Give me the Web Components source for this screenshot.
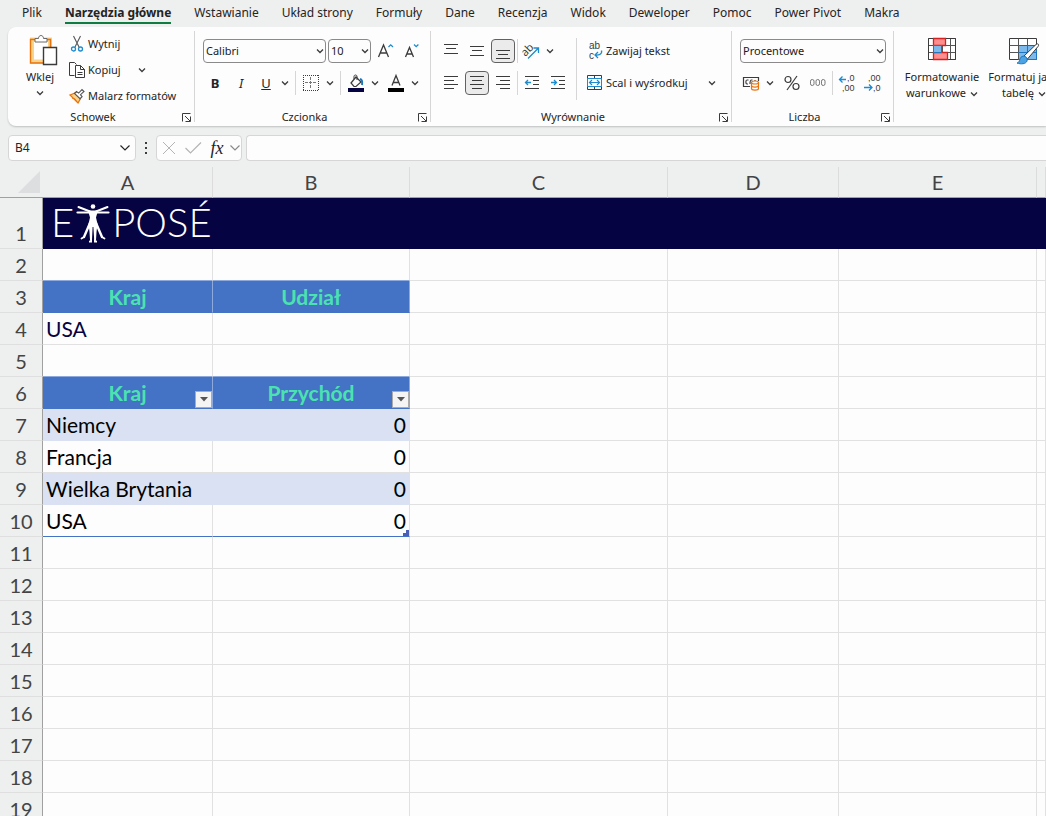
<!DOCTYPE html>
<html lang="pl">
<head>
<meta charset="utf-8">
<meta name="viewport" content="width=device-width, initial-scale=1">
<title>Arkusz</title>
<style>
  html, body { height: 100%; }
  body {
    margin: 0; display: flex; flex-direction: column; overflow: hidden;
    background: #eeefef; color: #242424;
    font: 11px/16px "Noto Sans", "Open Sans", sans-serif;
  }
</style>
</head>
<body>
<ribbon-tabs></ribbon-tabs>
<ribbon-bar>
  <ribbon-group name="Schowek" launcher size="clipboard">
    <tool-button icon="paste" big arrow>Wklej</tool-button>
    <tool-stack>
      <tool-row dense><tool-button icon="cut" wide>Wytnij</tool-button></tool-row>
      <tool-row dense><tool-button icon="copy" wide>Kopiuj</tool-button><tool-arrow label="Opcje kopiowania" spaced></tool-arrow></tool-row>
      <tool-row dense><tool-button icon="painter" wide>Malarz formatów</tool-button></tool-row>
    </tool-stack>
  </ribbon-group>
  <ribbon-group name="Czcionka" launcher size="font">
    <tool-stack>
      <tool-row>
        <drop-down label="Czcionka" value="Calibri" size="font"></drop-down>
        <drop-down label="Rozmiar czcionki" value="10" size="small"></drop-down>
        <tool-button icon="grow" label="Zwiększ rozmiar czcionki"></tool-button>
        <tool-button icon="shrink" label="Zmniejsz rozmiar czcionki"></tool-button>
      </tool-row>
      <tool-row>
        <tool-button label="Pogrubienie" glyph><b>B</b></tool-button>
        <tool-button label="Kursywa" glyph><i>I</i></tool-button>
        <tool-button label="Podkreślenie" glyph narrow><u>U</u></tool-button><tool-arrow label="Rodzaj podkreślenia"></tool-arrow>
        <tool-divider></tool-divider>
        <tool-button icon="borders" label="Obramowanie" narrow></tool-button><tool-arrow label="Rodzaj obramowania"></tool-arrow>
        <tool-divider></tool-divider>
        <tool-button icon="fill" label="Kolor wypełnienia" narrow></tool-button><tool-arrow label="Wybierz kolor wypełnienia"></tool-arrow>
        <tool-divider blank></tool-divider>
        <tool-button icon="color" label="Kolor czcionki" narrow></tool-button><tool-arrow label="Wybierz kolor czcionki"></tool-arrow>
      </tool-row>
    </tool-stack>
  </ribbon-group>
  <ribbon-group name="Wyrównanie" launcher size="align">
    <tool-stack>
      <tool-row>
        <tool-button icon="top" label="Wyrównaj do góry"></tool-button>
        <tool-button icon="middle" label="Wyrównaj do środka w pionie"></tool-button>
        <tool-button icon="bottom" label="Wyrównaj do dołu" pressed></tool-button>
        <tool-divider tight></tool-divider>
        <tool-button icon="orient" label="Orientacja" narrow></tool-button><tool-arrow label="Opcje orientacji"></tool-arrow>
      </tool-row>
      <tool-row>
        <tool-button icon="left" label="Wyrównaj do lewej"></tool-button>
        <tool-button icon="center" label="Wyśrodkuj" pressed></tool-button>
        <tool-button icon="right" label="Wyrównaj do prawej"></tool-button>
        <tool-divider tight></tool-divider>
        <tool-button icon="outdent" label="Zmniejsz wcięcie"></tool-button>
        <tool-button icon="indent" label="Zwiększ wcięcie"></tool-button>
      </tool-row>
    </tool-stack>
    <tool-divider tall></tool-divider>
    <tool-stack grow>
      <tool-row><tool-button icon="wrap" wide>Zawijaj tekst</tool-button></tool-row>
      <tool-row><tool-button icon="merge" wide>Scal i wyśrodkuj</tool-button><tool-arrow label="Opcje scalania" end></tool-arrow></tool-row>
    </tool-stack>
  </ribbon-group>
  <ribbon-group name="Liczba" launcher size="number">
    <tool-stack>
      <tool-row><drop-down label="Format liczb" value="Procentowe" size="large"></drop-down></tool-row>
      <tool-row>
        <tool-button icon="money" label="Księgowy format liczb" narrow></tool-button><tool-arrow label="Waluty"></tool-arrow>
        <tool-divider blank></tool-divider>
        <tool-button icon="percent" label="Zapis procentowy"></tool-button>
        <tool-button icon="thousands" label="Zapis dziesiętny"></tool-button>
        <tool-divider tight></tool-divider>
        <tool-button icon="moredec" label="Zwiększ dziesiętne"></tool-button>
        <tool-button icon="lessdec" label="Zmniejsz dziesiętne"></tool-button>
      </tool-row>
    </tool-stack>
  </ribbon-group>
  <ribbon-group name="" last>
    <tool-button icon="condfmt" big inline-arrow>Formatowanie<br>warunkowe</tool-button>
    <tool-button icon="tablefmt" big inline-arrow>Formatuj jako<br>tabelę</tool-button>
  </ribbon-group>
</ribbon-bar>
<formula-bar></formula-bar>
<sheet-grid></sheet-grid>

<script>
const G = 'stroke="#3b3b3b" fill="none"';
const B = 'stroke="#1e8bcd" fill="none"';
const T = 'font-family="Liberation Sans, sans-serif" font-size="9" fill="#3b3b3b"';
const hl = rows => rows.map(([x, y, w]) => `<path d="M${x} ${y}.5h${w}"/>`).join('');
const ICONS = {
  chevron: [8, 6, `<path d="M1 1.5l3 3 3-3" ${G} stroke-width="1.3"/>`],
  bigchevron: [12, 8, `<path d="M1.500 1.500l4.500 4.500 4.500-4.500" fill="none" stroke="currentColor" stroke-width="1.200"/>`],
  launcher: [9, 9, `<path d="M.5 8.500V.5H8.500M3 3l5 5M8.500 3.500v5h-5" stroke="#3b3b3b" fill="none"/>`],
  paste: [30, 32, `<path d="M4 4.500h18v22H4z" fill="#fff" stroke="#fbd38a" stroke-width="4"/><path d="M2.500 4.500h20v23.500H2.500z" stroke="#e8730c" fill="none" stroke-width="1.400"/><path d="M7 7V3.500h3.500c0-4 5-4 5 0H19V7z" fill="#fff" stroke="#6a6a6a"/><path d="M15.500 12.500h13v17h-13z" fill="#fff" stroke="#3b3b3b" stroke-width="1.400"/>`],
  cut: [16, 18, `<path d="M4.500 1l5.500 11M11.500 1L6 12" stroke="#555" fill="none" stroke-width="1.100"/><circle cx="4.500" cy="14" r="2" ${B} stroke-width="1.300"/><circle cx="11.500" cy="14" r="2" ${B} stroke-width="1.300"/>`],
  copy: [16, 18, `<path d="M5.500 14.500h-5V1.500h5l2 2" ${G}/><path d="M6.500 4.500h5l4 4v8h-9z" fill="#fff" stroke="#3b3b3b"/><path d="M11.500 4.500v4h4M8.500 11.500h5M8.500 13.500h5" ${G}/>`],
  painter: [16, 16, `<path d="M1 7l5-2 5.500 5.500L9 15z" fill="#fbd38a" stroke="#e8730c" stroke-width="1.300"/><path d="M3 10l3 1 2 3" stroke="#e8730c" fill="none"/><path d="M5.500 5.500l2-2 2.200 1.600L13 1.500 15 3.500l-3.500 3.200 1.600 2-2.100 2z" fill="#fff" stroke="#555" stroke-width="1.100"/>`],
  grow: [17, 16, `<path d="M1.500 14L6.500 2 11.500 14M3 10h7" ${G} stroke-width="1.300"/><path d="M11.500 4l2.200-2.200L16 4" ${B} stroke-width="1.300"/>`],
  shrink: [17, 16, `<path d="M2.500 14L6.500 4.500 10.500 14M4 11h5.500" ${G} stroke-width="1.300"/><path d="M11 1.500l2.200 2.200 2.200-2.200" ${B} stroke-width="1.300"/>`],
  borders: [16, 16, `<path d="M0 .5h16M0 15.500h16M.5 0v16M15.500 0v16" stroke="#3b3b3b" stroke-dasharray="1 1"/><path d="M2 7.500h12M7.500 2v12" stroke="#777" stroke-dasharray="3 1"/>`],
  fill: [16, 18, `<path d="M3 9l5-6 5 5-5 4.500H6z" ${G} stroke-width="1.200"/><path d="M6 5V2.500c0-2 3-2 3 0V6" ${G}/><path d="M12 5c2 .5 2.500 3 2 6" stroke="#1e74bd" fill="none" stroke-width="2"/><path d="M0 14h16v4H0z" fill="#050341"/>`],
  color: [16, 18, `<path d="M4 11.500L8 1.500l4 10M5.500 8.500h5" ${G} stroke-width="1.300"/><path d="M0 14h16v4H0z" fill="#000"/>`],
  top: [16, 16, `<g ${G}>${hl([[1, 1, 14], [3, 5, 10], [1, 10, 14]])}</g>`],
  middle: [16, 16, `<g ${G}>${hl([[1, 3, 14], [3, 7, 10], [1, 12, 14]])}</g>`],
  bottom: [16, 16, `<g ${G}>${hl([[1, 7, 14], [3, 11, 10], [1, 15, 14]])}</g>`],
  left: [16, 16, `<g ${G}>${hl([[1, 1, 14], [1, 5, 10], [1, 9, 14], [1, 13, 10]])}</g>`],
  center: [16, 16, `<g ${G}>${hl([[1, 1, 14], [3, 5, 10], [1, 9, 14], [3, 13, 10]])}</g>`],
  right: [16, 16, `<g ${G}>${hl([[1, 1, 14], [5, 5, 10], [1, 9, 14], [5, 13, 10]])}</g>`],
  outdent: [16, 16, `<g ${G}>${hl([[1, 1, 14], [9, 5, 6], [9, 9, 6], [1, 13, 14]])}</g><path d="M7 7.500H1.500M4 5L1.500 7.500 4 10" ${B} stroke-width="1.300"/>`],
  indent: [16, 16, `<g ${G}>${hl([[1, 1, 14], [9, 5, 6], [9, 9, 6], [1, 13, 14]])}</g><path d="M1 7.500h5.500M4 5l2.500 2.500L4 10" ${B} stroke-width="1.300"/>`],
  orient: [18, 18, `<text x="-1" y="11" transform="rotate(-45 6 8)" font-size="11" fill="#3b3b3b">ab</text><path d="M6 16.500L16 6.500M11.500 6H16.500V11" ${B} stroke-width="1.300"/>`],
  wrap: [16, 18, `<g ${T}><text x="2" y="7" font-size="10">ab</text><text x="2" y="17" font-size="10">c</text></g><path d="M14.500 8.500c1 4-3 5-6.500 4.500M11 10l-3 3 3 3" ${B} stroke-width="1.300"/>`],
  merge: [16, 16, `<path d="M.5.5h14v14H.5zM7.500.5v3M7.500 11.500v3" ${G}/><path d="M.5 3.500h14v8H.5z" fill="#fff" stroke="#1e8bcd"/><path d="M2.500 7.500h10M5 5L2.500 7.500 5 10M10 5l2.500 2.500L10 10" ${B} stroke-width="1.200"/>`],
  money: [18, 16, `<path d="M8 11.500H1.500v-9h15V6M6.500 5H5C3.500 5 3.500 9 5 9h1M10.500 5h-1C8 5 8 7 8 9M13 5v1" ${G} stroke-width="1.200"/><path d="M9.500 7.500v6c0 2.200 7 2.200 7 0v-6z" fill="#fff" stroke="#e8730c" stroke-width="1.200"/><ellipse cx="13" cy="7.500" rx="3.500" ry="1.500" fill="#fff" stroke="#e8730c" stroke-width="1.200"/><path d="M9.500 10.500c0 2.200 7 2.200 7 0" fill="none" stroke="#e8730c" stroke-width="1.200"/>`],
  percent: [18, 18, `<circle cx="5" cy="5.500" r="3" ${G} stroke-width="1.200"/><circle cx="13" cy="12.500" r="3" ${G} stroke-width="1.200"/><path d="M14 2L4 16" ${G} stroke-width="1.200"/>`],
  thousands: [18, 16, `<g stroke="#777" fill="none"><rect x="1.500" y="4.500" width="3.500" height="6" rx="1.700"/><rect x="7" y="4.500" width="3.500" height="6" rx="1.700"/><rect x="12.500" y="4.500" width="3.500" height="6" rx="1.700"/></g>`],
  moredec: [18, 18, `<g ${T}><text x="9" y="7">,0</text><text x="4" y="17">,00</text></g><path d="M8 5.500H1.500M4.500 2.500l-3 3 3 3" ${B} stroke-width="1.300"/>`],
  lessdec: [18, 18, `<g ${T}><text x="4" y="7">,00</text><text x="9" y="17">,0</text></g><path d="M0 13.500h8M5 10.500l3 3-3 3" ${B} stroke-width="1.300"/>`],
  condfmt: [30, 24, `<path d="M1.500 1.500h27v21h-27zM1.500 8.500h27M1.500 15.500h27M6.500 1.500v21M15.500 1.500v21M23.500 1.500v21" fill="#fff" stroke="#555"/><path d="M6.500 1.500h12v7h-12zM6.500 15.500h14v7h-14z" fill="#ff8f8f" stroke="#d61f1f" stroke-width="1.300"/><path d="M6.500 8.500h8v7h-8z" fill="#7db9ea" stroke="#2673b8"/><path d="M6 1.500H1.500v21H6M19 1.500h9.500v21h-7" ${G}/>`],
  tablefmt: [32, 28, `<path d="M1.500 1.500h27v21h-27z" fill="#fff" stroke="#3b3b3b"/><path d="M10.500 8.500h18v14h-18z" fill="#7db9ea" stroke="#1e74bd"/><path d="M1.500 8.500h27M1.500 15.500h9M10.500 1.500v21M19.500 1.500v7" stroke="#555"/><path d="M10.500 15.500h18M19.500 8.500v14" stroke="#1e74bd"/><path d="M16 19L28 7.500c2-1.500 3.500 0 2 2L19.500 22z" fill="#fff" stroke="#3b3b3b"/><path d="M9 26c3 0 2-5 5-6.500s6 1.500 5 4.500-6 3.500-10 2z" fill="#4ba3e3" stroke="#1e74bd"/>`],
  cancel: [14, 14, `<path d="M1 1l12 12M13 1L1 13" stroke="#b4b4b4"/>`],
  accept: [18, 14, `<path d="M1.500 7l5 5L17 1.500" fill="none" stroke="#b4b4b4" stroke-width="1.200"/>`],
  dots: [4, 12, `<g fill="#3b3b3b"><path d="M1 0h2v2H1zM1 5h2v2H1zM1 10h2v2H1z"/></g>`],
  figure: [34, 40, `<g fill="#fff"><circle cx="17" cy="3.500" r="2.300"/><path d="M12 7.500h10l-2 7L21.500 21l-1 8-.500 8h-1.800l-.8-13h-.8L16 37h-2l-.5-8-1-8L14 14.500z"/><path d="M13 38l3-2v3.500h-3zM21 38l-3-2v3.500h3z"/></g><g stroke="#fff" fill="none" stroke-linecap="round"><path d="M1.500 9.500h31" stroke-width="2.200"/><path d="M2.500 4L14 8.500M31.500 4L20 8.500" stroke-width="2"/><path d="M14 20L8 34M20 20l6 14" stroke-width="2.400"/><path d="M5.500 35.500l2.500-1.500M28.500 35.500l-2.500-1.500" stroke-width="1.800"/></g>`],
  corner: [22, 22, `<path d="M22 0v22H0z" fill="#dcdedf"/>`],
  filter: [8, 5, `<path d="M0 0h8L4 4.500z" fill="#555"/>`],
};
const icon = n => `<svg aria-hidden="true" width="${ICONS[n][0]}" height="${ICONS[n][1]}" viewBox="0 0 ${ICONS[n][0]} ${ICONS[n][1]}">${ICONS[n][2]}</svg>`;

const RESET = `
  *, *::before { box-sizing: border-box; }
  :host { box-sizing: border-box; }
  svg { display: block; flex: none; overflow: visible; }
  button, select, input { font: inherit; color: inherit; margin: 0; padding: 0; border: 0; background: none; }
`;
const define = (name, render) => customElements.define(name, class extends HTMLElement {
  constructor() { super(); this.attachShadow({ mode: 'open' }); }
  connectedCallback() {
    const t = document.createElement('template');
    t.innerHTML = render(this);
    this.shadowRoot.replaceChildren(t.content.cloneNode(true));
  }
});

define('ribbon-tabs', () => {
  const tabs = ['Plik', 'Narzędzia główne', 'Wstawianie', 'Układ strony', 'Formuły', 'Dane', 'Recenzja', 'Widok', 'Deweloper', 'Pomoc', 'Power Pivot', 'Makra'];
  return `<style>${RESET}
    :host { display: block; flex: none; overflow: hidden; font-size: 12px; }
    nav { display: flex; gap: 23px; height: 27px; padding: 4px 0 0 22px; }
    a { flex: none; height: 20px; color: inherit; text-decoration: none; line-height: 18px; white-space: nowrap; }
    a[aria-current] { font-weight: 700; border-bottom: 2px solid #107c41; }
  </style><nav>${tabs.map((t, i) => `<a href="#"${i === 1 ? ' aria-current="page"' : ''}>${t}</a>`).join('')}</nav>`;
});

define('ribbon-bar', () => `<style>${RESET}
  :host { display: block; flex: none; padding-left: 8px; overflow: hidden; height: 102px; }
  div { display: flex; height: 99px; background: #fdfdfd; border-radius: 8px 0 0 8px; box-shadow: 0 1px 2px #0003; }
</style><div><slot></slot></div>`);

define('ribbon-group', el => `<style>${RESET}
  :host { display: flex; flex-direction: column; flex: none; }
  :host(:not([last])) { border-right: 1px solid #d6d6d6; border-image: linear-gradient(transparent 5px, #d6d6d6 5px, #d6d6d6 94px, transparent 94px) 1; }
  :host([size=clipboard]) { width: 187px; }
  :host([size=font]) { width: 236px; }
  :host([size=align]) { width: 301px; }
  :host([size=number]) { width: 162px; }
  .body { display: flex; height: 81px; padding: 3px 6px 0 7px; }
  :host([size=clipboard]) .body { padding-left: 5px; }
  footer { display: flex; align-items: center; height: 18px; }
  footer span { flex: 1; text-align: center; }
  footer button { display: grid; place-items: center; width: 16px; height: 16px; }
</style><div class="body"><slot></slot></div>
<footer><span>${el.getAttribute('name')}</span>${el.hasAttribute('launcher') ? `<button aria-label="Więcej opcji">${icon('launcher')}</button>` : ''}</footer>`);

define('tool-stack', () => `<style>:host { display: flex; flex-direction: column; flex: none; } :host([grow]) { flex: 1; }</style><slot></slot>`);

define('tool-row', () => `<style>
  :host { display: flex; align-items: center; height: 32px; }
  :host(:first-child) { margin-top: 5px; }
  :host([dense]) { height: 26px; }
  :host([dense]:first-child) { margin-top: 1px; }
</style><slot></slot>`);

define('tool-divider', () => `<style>
  :host { display: block; flex: none; width: 1px; height: 24px; margin: 0 3px; background: #d6d6d6; }
  :host([tight]) { margin: 0 1px; }
  :host([blank]) { margin: 0 1px 0 0; background: none; }
  :host([tall]) { height: 62px; margin: 8px 8px 0 5px; }
</style>`);

define('tool-arrow', el => `<style>${RESET}
  :host { display: block; flex: none; }
  :host([spaced]) { margin-left: 14px; }
  :host([end]) { margin-left: auto; margin-right: 6px; }
  button { display: grid; place-items: center; width: 14px; height: 24px; }
</style><button aria-label="${el.getAttribute('label')}">${icon('chevron')}</button>`);

define('tool-button', el => {
  const n = el.getAttribute('icon'), l = el.getAttribute('label');
  return `<style>${RESET}
    :host { display: block; flex: none; }
    button { display: flex; align-items: center; justify-content: center; width: 26px; height: 26px; white-space: nowrap; }
    :host([narrow]) button { width: 24px; }
    :host([glyph]) button { font-size: 13px; }
    :host([pressed]) button { width: 24px; height: 24px; margin: 0 1px; background: #ebebeb; border: 1px solid #616161; border-radius: 4px; }
    :host([wide]) button { width: auto; gap: 3px; padding-left: 2px; }
    :host([big]) button { flex-direction: column; justify-content: flex-start; width: 54px; height: 78px; padding-top: 5px; }
    :host([big][inline-arrow]) button { width: 82px; }
    :host([big]) .icon { height: 34px; }
    :host([big][arrow]) .icon { padding-left: 6px; }
    :host([inline-arrow]) .icon { padding-top: 2px; }
    .arrow { padding-top: 5px; }
    .after { display: inline-block; vertical-align: middle; margin-left: 4px; }
  </style><button${l ? ` aria-label="${l}"` : ''}${el.hasAttribute('pressed') ? ' aria-pressed="true"' : ''}>
    ${n ? `<span class="icon">${icon(n)}</span>` : ''}${n && l ? '' : `<span class="text"><slot></slot>${el.hasAttribute('inline-arrow') ? `<span class="after">${icon('chevron')}</span>` : ''}</span>`}${el.hasAttribute('arrow') ? `<span class="arrow">${icon('chevron')}</span>` : ''}
  </button>`;
});

define('drop-down', el => `<style>${RESET}
  :host { display: grid; align-items: center; flex: none; margin: 0 1px; }
  :host([size=font]) { width: 123px; }
  :host([size=small]) { width: 43px; margin-right: 1px; }
  :host([size=large]) { width: 146px; }
  select, svg { grid-area: 1 / 1; }
  select { appearance: none; width: 100%; height: 24px; padding-left: 2px; border: 1px solid #8a8a8a; border-radius: 4px; background: #fdfdfd; color: #1a1a1a; }
  svg { justify-self: end; margin-right: 2px; pointer-events: none; }
</style><select aria-label="${el.getAttribute('label')}"><option>${el.getAttribute('value')}</option></select>${icon('chevron')}`);

define('formula-bar', () => `<style>${RESET}
  :host { display: flex; align-items: center; flex: none; height: 38px; padding-left: 8px; }
  .box { display: flex; align-items: center; height: 26px; background: #fdfdfd; border: 1px solid #d6d6d6; border-radius: 4px; }
  .name { width: 128px; }
  .name input { flex: 1; min-width: 0; padding-left: 6px; font-size: 12px; }
  button { display: grid; place-items: center; width: 24px; height: 24px; }
  .name button { width: 20px; }
  .grip { width: 20px; display: grid; place-items: center; }
  .tools { width: 86px; margin-right: 4px; }
  .tools .fx { font: italic 18px/20px "Liberation Serif", serif; }
  .tools .more { width: 12px; color: #8a8a8a; }
  .entry { flex: 1; min-width: 0; border-right: 0; border-radius: 4px 0 0 4px; }
  .entry input { width: 100%; height: 100%; padding: 0 6px; }
</style>
<div class="box name"><input aria-label="Pole nazwy" value="B4"><button aria-label="Lista nazw">${icon('bigchevron')}</button></div>
<span class="grip">${icon('dots')}</span>
<div class="box tools"><button aria-label="Anuluj">${icon('cancel')}</button><button aria-label="Wpis">${icon('accept')}</button><button class="fx" aria-label="Wstaw funkcję">fx</button><button class="more" aria-label="Więcej">${icon('bigchevron')}</button></div>
<div class="box entry"><input aria-label="Pasek formuły"></div>`);

define('filter-button', () => `<style>${RESET}
  :host { position: absolute; right: 0; bottom: 0; }
  button { display: grid; place-items: center; width: 17px; height: 17px; background: #f4f4f4; border: 1px solid #ababab; }
</style><button aria-label="Filtruj">${icon('filter')}</button>`);

define('expose-logo', () => `<style>${RESET}
  :host { display: flex; align-items: flex-start; height: 50px; padding-left: 8px; color: #fff; font: 300 40px/48px Lato, sans-serif; }
  svg { margin: 5px 2px 0; }
</style><span>E</span>${icon('figure')}<span>POSÉ</span>`);

define('sheet-grid', () => {
  const cells = {
    2: ['<td class="above"></td>', '<td class="above"></td>'],
    3: ['<td class="h">Kraj</td>', '<td class="h">Udział</td>'],
    4: ['<td class="ink">USA</td>', '<td></td>'],
    5: ['<td class="above"></td>', '<td class="above"></td>'],
    6: ['<td class="h">Kraj<filter-button></filter-button></td>', '<td class="h">Przychód<filter-button></filter-button></td>'],
    7: ['<td class="band">Niemcy</td>', '<td class="band n">0</td>'],
    8: ['<td>Francja</td>', '<td class="n">0</td>'],
    9: ['<td class="band">Wielka Brytania</td>', '<td class="band n">0</td>'],
    10: ['<td class="end">USA</td>', '<td class="end n">0<span class="handle"></span></td>'],
  };
  let rows = '';
  for (let r = 2; r < 20; r++) rows += `<tr><th scope="row">${r}</th>${(cells[r] || ['<td></td>', '<td></td>']).join('')}${'<td></td>'.repeat(4)}</tr>`;
  return `<style>${RESET}
    :host { display: block; flex: 1; min-height: 0; overflow: hidden; font: 20px/30px Lato, "Open Sans", sans-serif; color: #000; }
    table { width: 100%; min-width: 1046px; table-layout: fixed; border-collapse: separate; border-spacing: 0; background: #fdfdfd; }
    th, td { height: 32px; padding: 0; }
    th { background: #eeefef; color: #444; font-weight: 400; }
    thead th { height: 31px; line-height: 30px; border-bottom: 1px solid #a0a0a0; border-right: 1px solid #dcdcdc; }
    thead th:first-child { border-right: 0; }
    thead svg { margin: 0 0 0 18px; }
    tbody th { border-right: 1px solid #a0a0a0; border-bottom: 1px solid #dfdfdf; }
    td { position: relative; padding: 0 3px; font-size: 21px; border-right: 1px solid #e1e1e1; border-bottom: 1px solid #e1e1e1; white-space: nowrap; }
    .first th { height: 51px; vertical-align: bottom; }
    .first td { height: 51px; background: #050341; border-color: #050341; padding: 0; vertical-align: top; }
    .above { border-bottom-color: #8ea9db; }
    .h { background: #4472c4; color: #4ae3b0; font-weight: 700; text-align: center; border-right-color: #8ea9db; border-bottom-color: #4472c4; }
    .ink { color: #050341; }
    .band { background: #d9e1f2; border-color: #d9e1f2; }
    .n { text-align: right; }
    .end { border-bottom-color: #4472c4; }
    .handle { position: absolute; right: 0; bottom: 0; width: 6px; height: 6px; background: #4a5fb5; clip-path: polygon(50% 0, 100% 0, 100% 100%, 0 100%, 0 50%, 50% 50%); }
  </style>
  <table>
    <colgroup><col style="width:43px"><col style="width:170px"><col style="width:197px"><col style="width:258px"><col style="width:171px"><col style="width:198px"><col></colgroup>
    <thead><tr><th>${icon('corner')}</th>${['A', 'B', 'C', 'D', 'E', ''].map(c => `<th scope="col">${c}</th>`).join('')}</tr></thead>
    <tbody><tr class="first"><th scope="row">1</th><td colspan="6"><expose-logo></expose-logo></td></tr>${rows}</tbody>
  </table>`;
});
</script>
</body>
</html>
